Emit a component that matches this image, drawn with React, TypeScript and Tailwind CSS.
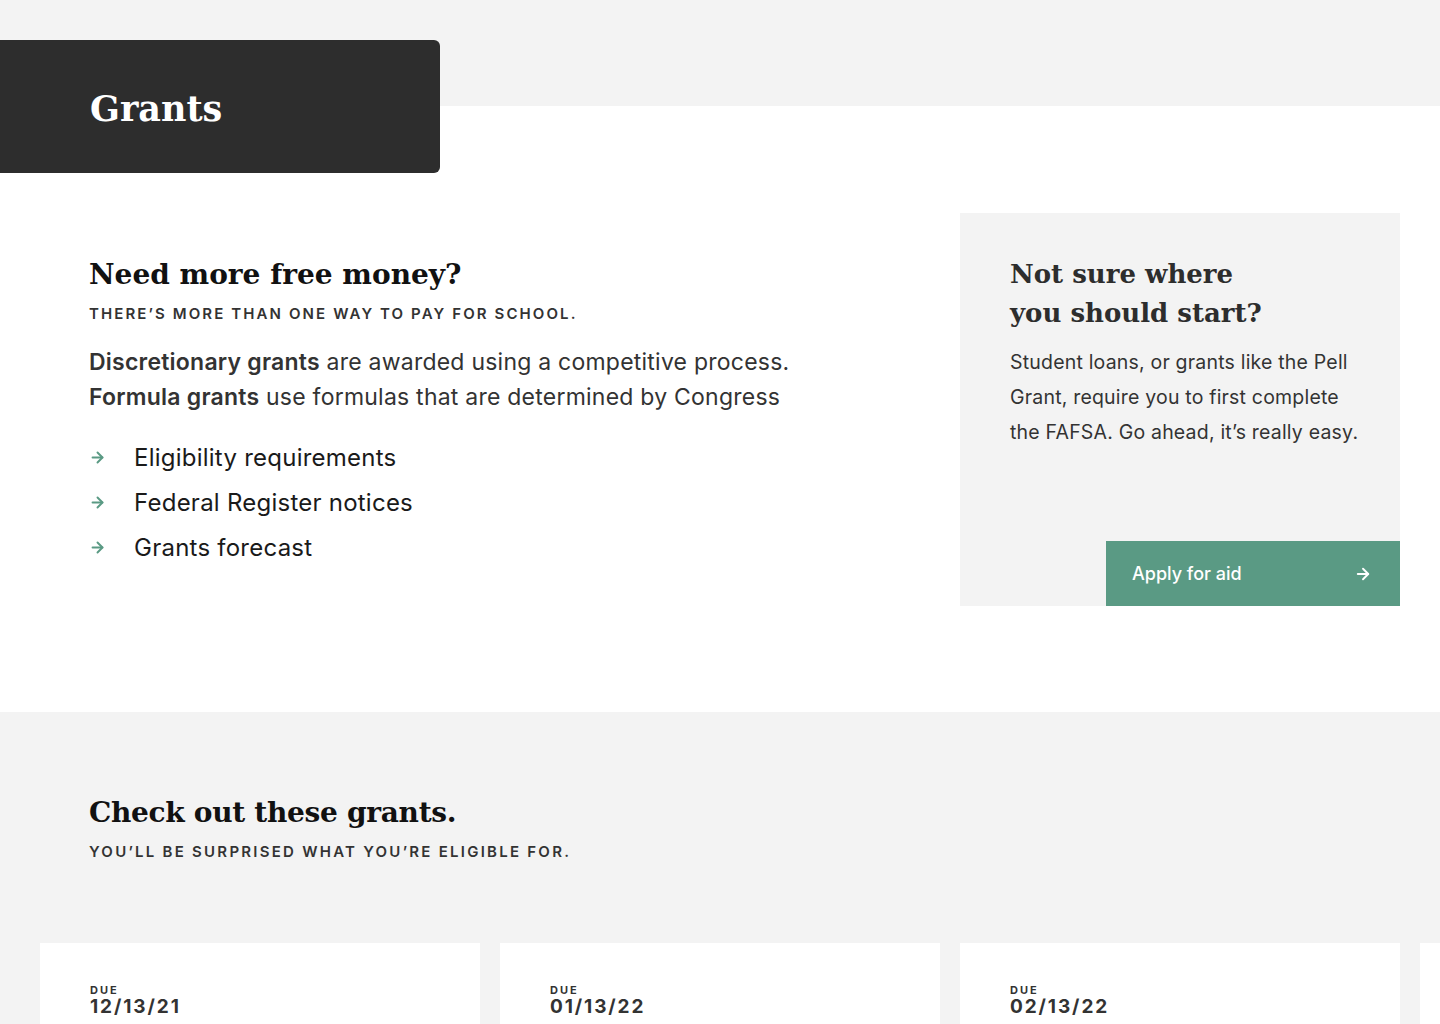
import { ArrowRight } from "lucide-react";

const serif = "font-['DejaVu_Serif',serif]";
const sans = "font-['Inter',sans-serif]";

const links = ["Eligibility requirements", "Federal Register notices", "Grants forecast"];

// last one only peeks in at the right edge
const grants = [
    { due: "12/13/21" },
    { due: "01/13/22" },
    { due: "02/13/22" },
    { due: "" },
];

const App = () => {
    return (
        <div className={`min-h-screen w-full overflow-hidden bg-[linear-gradient(#f3f3f3_106px,#ffffff_106px)] ${sans}`}>
            {/* page tab */}
            <div className="pt-10">
                <div className="flex h-[133px] w-[440px] items-center rounded-r-md bg-[#2d2d2d] pl-[90px] pt-[5px]">
                    <h1 className={`${serif} text-[35px] font-bold text-white`}>Grants</h1>
                </div>
            </div>

            {/* intro */}
            <section className="flex justify-between px-10 pt-10 pb-[106px]">
                <div className="pl-[49px] pt-[42px]">
                    <h2 className={`${serif} text-[28px] font-bold leading-[40px] text-[#111]`}>Need more free money?</h2>
                    <p className="mt-[8px] text-[15px] font-semibold uppercase tracking-[0.14em] text-[#333]">There’s more than one way to pay for school.</p>
                    <p className="mt-[19px] text-[23px] leading-[35px] tracking-[0.01em] text-[#333]">
                        <b className="font-semibold">Discretionary grants</b> are awarded using a competitive process.
                        <br />
                        <b className="font-semibold">Formula grants</b> use formulas that are determined by Congress
                    </p>
                    <ul className="mt-[27px] flex flex-col gap-[13px]">
                        {links.map((l) => (
                            <li key={l} className="flex h-[32px] items-center">
                                <ArrowRight size={17} strokeWidth={2.75} className="text-[#5a9a84]" />
                                <span className="ml-[28px] text-[24px] tracking-[0.01em] text-[#1a1a1a]">{l}</span>
                            </li>
                        ))}
                    </ul>
                </div>

                <aside className="flex h-[393px] w-[440px] flex-col bg-[#f3f3f3]">
                    <div className="pl-[50px] pr-[36px] pt-[42px]">
                        <h3 className={`${serif} text-[26px] font-bold leading-[39px] text-[#2d2d2d]`}>
                            Not sure where
                            <br />
                            you should start?
                        </h3>
                        <p className="mt-[12px] text-[19.5px] leading-[35px] tracking-[0.01em] text-[#333]">
                            Student loans, or grants like the Pell Grant, require you to first complete the FAFSA. Go ahead, it’s really easy.
                        </p>
                    </div>
                    <button className="mt-auto ml-auto flex h-[65px] w-[294px] items-center justify-between bg-[#5a9a84] pl-[26px] pr-[28px] text-[18px] font-medium text-white">
                        Apply for aid
                        <ArrowRight size={18} strokeWidth={2.5} />
                    </button>
                </aside>
            </section>

            {/* grants list */}
            <section className="bg-[#f3f3f3] pt-[78px]">
                <div className="pl-[89px]">
                    <h2 className={`${serif} text-[28px] font-bold leading-[46px] tracking-[-0.3px] text-[#111]`}>Check out these grants.</h2>
                    <p className="mt-[5px] text-[15px] font-semibold uppercase tracking-[0.15em] text-[#333]">You’ll be surprised what you’re eligible for.</p>
                </div>
                <div className="mt-[79px] flex gap-5 pl-10">
                    {grants.map((g, i) => (
                        <div key={i} className="h-[200px] w-[440px] shrink-0 bg-white px-[50px] pt-[40px]">
                            {g.due && (
                                <>
                                    <div className="text-[11px] font-bold uppercase leading-[14px] tracking-[0.18em] text-[#333]">Due</div>
                                    <div className="text-[19px] font-bold leading-[20px] tracking-[0.1em] text-[#333]">{g.due}</div>
                                </>
                            )}
                        </div>
                    ))}
                </div>
            </section>
        </div>
    );
};

export default App;
